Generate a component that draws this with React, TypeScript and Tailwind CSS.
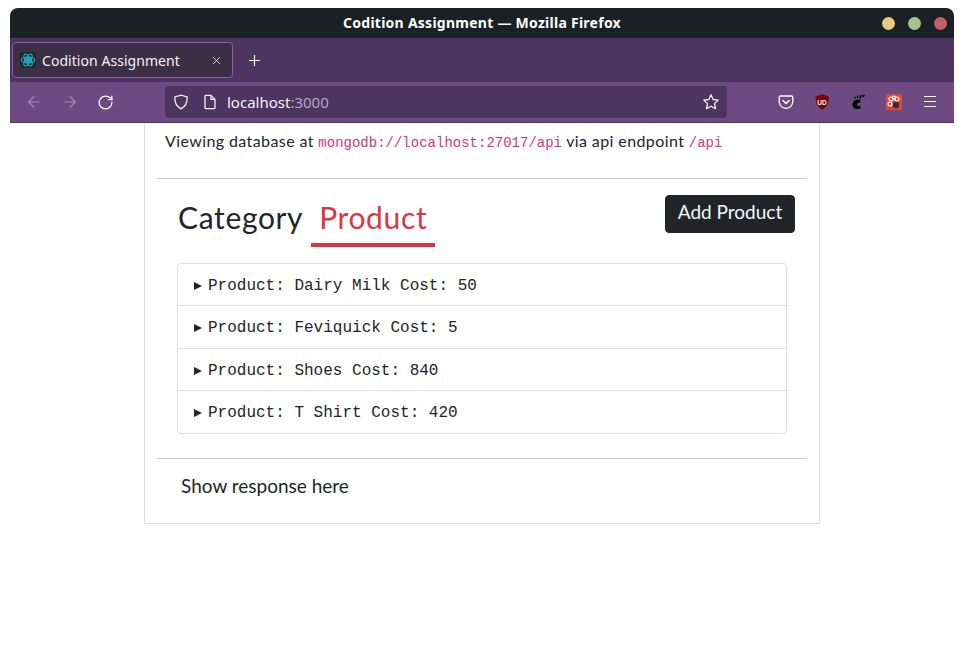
import { ArrowLeft, ArrowRight, Plus, RotateCw, X } from "lucide-react"

const products = [
  { label: "Product: Dairy Milk Cost: 50", row: "h-[41px] pt-[2px]" },
  { label: "Product: Feviquick Cost: 5", row: "h-[43px] pt-[2px] border-t border-[#dfdfdf]" },
  { label: "Product: Shoes Cost: 840", row: "h-[42px] pt-[3px] border-t border-[#dfdfdf]" },
  { label: "Product: T Shirt Cost: 420", row: "h-[43px] pt-[2px] border-t border-[#dfdfdf]" },
]

function ReactIcon() {
  return (
    <div className="w-4 h-4 bg-[#20292b] rounded-[2px] flex items-center justify-center shrink-0">
      <svg width="16" height="16" viewBox="0 0 24 24" fill="none" stroke="#1fb4c9" strokeWidth="1.6">
        <circle cx="12" cy="12" r="2.2" fill="#1fb4c9" />
        <ellipse cx="12" cy="12" rx="10" ry="4" />
        <ellipse cx="12" cy="12" rx="10" ry="4" transform="rotate(60 12 12)" />
        <ellipse cx="12" cy="12" rx="10" ry="4" transform="rotate(120 12 12)" />
      </svg>
    </div>
  )
}

function Browser() {
  return (
    <div className="font-['Noto_Sans',sans-serif]">
      <div className="h-[30px] bg-[#1a2023] rounded-t-[8px] flex items-center relative">
        <div className="flex-1 text-center text-white text-[14px] font-bold leading-none tracking-[0.26px]">
          Codition Assignment — Mozilla Firefox
        </div>
        <div className="absolute right-[7.5px] top-[8.5px] flex gap-[13px]">
          <span className="w-[13px] h-[13px] rounded-full bg-[#e8c987]" />
          <span className="w-[13px] h-[13px] rounded-full bg-[#a3c28c]" />
          <span className="w-[13px] h-[13px] rounded-full bg-[#c0616a]" />
        </div>
      </div>
      <div className="h-[44px] bg-[#4e3460] flex items-center pl-[2px]">
        <div className="w-[221px] h-[36px] bg-[#3c2e45] border border-[#8a5ea8] rounded-[4px] flex items-center pl-[7px] pr-[9px] text-[#f4f0f6]">
          <ReactIcon />
          <span className="ml-[6px] flex-1 text-[14px] whitespace-nowrap tracking-[0.05px]">Codition Assignment</span>
          <X size={13} strokeWidth={1.5} />
        </div>
        <Plus size={17} strokeWidth={1.6} color="#ffffff" className="ml-[13px]" />
      </div>
      <div className="h-[41px] bg-[#6e4a82] border-b border-[#4e3460] flex items-center">
        <ArrowLeft size={18} strokeWidth={1.5} color="#a48db2" className="ml-[15px]" />
        <ArrowRight size={18} strokeWidth={1.5} color="#a48db2" className="ml-[18px]" />
        <RotateCw size={17} strokeWidth={1.8} color="#ffffff" className="ml-[18px]" />
        <div className="ml-[51px] w-[562px] h-[32px] bg-[#4e3460] rounded-[4px] flex items-center pl-[8px] pr-[7px]">
          <svg width="16" height="16" viewBox="0 0 16 16" fill="none" stroke="#f4f0f6" strokeWidth="1.3">
            <path d="M8 1.2 14.2 3c.2 5.6-1.6 9.6-6.2 11.8C3.400 12.600 1.600 8.600 1.800 3L8 1.200Z" />
          </svg>
          <svg width="16" height="16" viewBox="0 0 16 16" fill="none" stroke="#f4f0f6" strokeWidth="1.3" className="ml-[13px]">
            <path d="M3 2.200C3 1.600 3.500 1.400 4 1.400h5l4 4v8c0 .7-.4 1.200-1 1.200H4c-.6 0-1-.5-1-1.200V2.200Z" />
            <path d="M9 1.400v4h4" />
          </svg>
          <span className="ml-[9px] flex-1 text-[15px] pt-[1px] text-[#f4f0f6] whitespace-nowrap">
            localhost<span className="text-[#b5a5c0]">:3000</span>
          </span>
          <svg width="18" height="18" viewBox="0 0 18 18" fill="none" stroke="#f4f0f6" strokeWidth="1.3" strokeLinejoin="round">
            <path d="m9 1.800 2.200 4.700 5 .6-3.700 3.500 1 5.100L9 13.200l-4.500 2.500 1-5.100L1.800 7.100l5-.6L9 1.800Z" />
          </svg>
        </div>
        <svg width="16" height="16" viewBox="0 0 16 16" fill="none" stroke="#ffffff" strokeWidth="1.3" className="ml-[51px]">
          <path d="M2.500 2h11c.8 0 1.300.5 1.300 1.300v4.200c0 3.900-3 6.800-6.800 6.800S1.200 11.400 1.200 7.500V3.300C1.200 2.500 1.700 2 2.500 2Z" />
          <path d="m5 6.500 3 3 3-3" strokeWidth="1.500" strokeLinecap="round" />
        </svg>
        <svg width="16" height="16" viewBox="0 0 16 16" className="ml-[20px]">
          <path d="M8 .5 14.500 2.500c.2 6-1.500 10.500-6.500 13C3 13 1.300 8.500 1.500 2.500L8 .5Z" fill="#800000" />
          <path d="M8 .5 14.500 2.500c.2 6-1.500 10.500-6.500 13V.5Z" fill="#6b0000" />
          <text x="8" y="10.500" textAnchor="middle" fontSize="6.500" fontWeight="700" fill="#ffffff" fontFamily="Liberation Sans, sans-serif">UD</text>
        </svg>
        <svg width="16" height="16" viewBox="0 0 16 16" fill="#000000" className="ml-[20px]">
          <path d="M8.500 5.500c-3.500 0-6 2.500-6 5.200 0 2.700 2.300 4.300 5 4.300 1.800 0 3.200-.7 3.200-1.800 0-.9-1-1.100-2-1.100-1.200 0-1.800-.5-1.800-1.500 0-1.300 1.200-2 2.400-2 .8 0 1.200-.4 1.200-1.300 0-1.200-.8-1.800-2-1.800Z" />
          <ellipse cx="10.500" cy="2.800" rx="1.100" ry="1.800" transform="rotate(20 10.500 2.800)" />
          <ellipse cx="7.500" cy="2.800" rx=".8" ry="1.300" />
          <ellipse cx="5" cy="3.800" rx=".7" ry="1.100" />
          <ellipse cx="13.500" cy="1.800" rx="1.400" ry="1" transform="rotate(-30 13.500 1.800)" />
        </svg>
        <svg width="16" height="16" viewBox="0 0 16 16" className="ml-[20px]">
          <rect width="16" height="16" fill="#d9483b" />
          <g fill="none" stroke="#ffffff" strokeWidth="1.200">
            <circle cx="5" cy="5" r="2" />
            <circle cx="11" cy="5" r="2" />
            <circle cx="4" cy="10" r="2" />
            <circle cx="8" cy="3.500" r="1.500" />
          </g>
          <circle cx="10" cy="11" r="3.200" fill="#33302e" />
        </svg>
        <svg width="12" height="12" viewBox="0 0 12 12" stroke="#ffffff" strokeWidth="1" className="ml-[22px]">
          <path d="M0 .5h12M0 5.500h12M0 10.500h12" />
        </svg>
      </div>
    </div>
  )
}

export default function App() {
  return (
    <div className="min-h-[659px] bg-white pt-[8px] pl-[10px] pr-[10px]">
      <Browser />
      <div className="ml-[134px] w-[676px] h-[401px] border border-t-0 border-[#dfdfdf] px-[12px] font-['Lato',sans-serif] text-[#212529]">
        <div className="h-[56px] pl-[8px] pt-[6px] text-[16px] leading-[24px] border-b border-[#c9c9c9] whitespace-nowrap tracking-[0.4px]">
          Viewing database at{" "}
          <code className="font-['Liberation_Mono',monospace] text-[14px] text-[#d63384] tracking-normal">mongodb://localhost:27017/api</code>{" "}
          via api endpoint{" "}
          <code className="font-['Liberation_Mono',monospace] text-[14px] text-[#d63384] tracking-normal">/api</code>
        </div>
        <div className="flex items-start justify-between pl-[21px] pr-[12px] pt-[16px]">
          <div className="flex text-[30px] leading-[44px] tracking-[0.65px] whitespace-nowrap">
            <div>Category</div>
            <div className="ml-[8px] w-[124px] h-[52px] text-center text-[#dc3545] border-b-[4px] border-[#dc3545]">Product</div>
          </div>
          <button className="w-[130px] h-[38px] pb-[3px] bg-[#212529] border border-[#212529] rounded-[4px] text-[#f8f9fa] text-[19px]">
            Add Product
          </button>
        </div>
        <div className="mt-[16px] ml-[20px] w-[610px] border border-[#dfdfdf] rounded-[4px] font-['Liberation_Mono',monospace] text-[16px]">
          {products.map((p) => (
            <div key={p.label} className={"pl-[16px] flex items-center whitespace-nowrap " + p.row}>
              <span className="w-0 h-0 border-y-[4px] border-y-transparent border-l-[8px] border-l-[#212529] mr-[6px]" />
              {p.label}
            </div>
          ))}
        </div>
        <div className="mt-[24px] border-t border-[#c9c9c9] pl-[24px] pt-[15px] text-[19px] leading-[24px]">
          Show response here
        </div>
      </div>
    </div>
  )
}
